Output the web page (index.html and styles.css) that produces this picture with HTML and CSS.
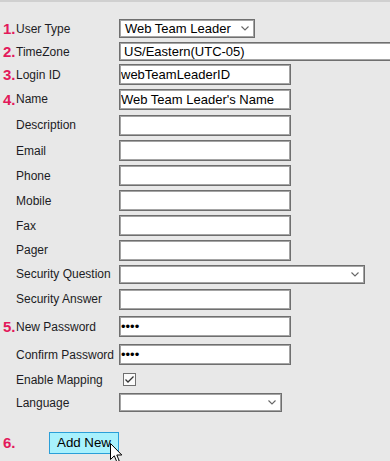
FILE: index.html
```html
<!DOCTYPE html>
<html>
<head>
<meta charset="utf-8">
<link rel="stylesheet" href="styles.css">
</head>
<body>
<form class="form">
  <div class="row h23"><span class="num">1.</span><span class="lbl">User Type</span>
    <div class="sel sel-type"><span>Web Team Leader</span><svg class="chev" width="8" height="5" viewBox="0 0 8 5"><polyline points="0.5,0.5 4,4 7.5,0.5" fill="none" stroke="#666" stroke-width="1.1"/></svg></div></div>
  <div class="row h23"><span class="num">2.</span><span class="lbl">TimeZone</span>
    <input class="field tz" type="text" value="US/Eastern(UTC-05)"></div>
  <div class="row h23"><span class="num">3.</span><span class="lbl">Login ID</span>
    <input class="field" type="text" value="webTeamLeaderID"></div>
  <div class="row h26"><span class="num">4.</span><span class="lbl">Name</span>
    <input class="field" type="text" value="Web Team Leader's Name"></div>
  <div class="row h26"><span class="num"></span><span class="lbl">Description</span>
    <input class="field" type="text"></div>
  <div class="row h25"><span class="num"></span><span class="lbl">Email</span>
    <input class="field" type="text"></div>
  <div class="row h25"><span class="num"></span><span class="lbl">Phone</span>
    <input class="field" type="text"></div>
  <div class="row h25"><span class="num"></span><span class="lbl">Mobile</span>
    <input class="field" type="text"></div>
  <div class="row h25"><span class="num"></span><span class="lbl">Fax</span>
    <input class="field" type="text"></div>
  <div class="row h24"><span class="num"></span><span class="lbl">Pager</span>
    <input class="field" type="text"></div>
  <div class="row h24"><span class="num"></span><span class="lbl">Security Question</span>
    <div class="sel sel-q"><span></span><svg class="chev" width="8" height="5" viewBox="0 0 8 5"><polyline points="0.5,0.5 4,4 7.5,0.5" fill="none" stroke="#666" stroke-width="1.1"/></svg></div></div>
  <div class="row h26"><span class="num"></span><span class="lbl">Security Answer</span>
    <input class="field" type="text"></div>
  <div class="row h29"><span class="num">5.</span><span class="lbl">New Password</span>
    <input class="field" type="password" value="abcd"></div>
  <div class="row h27"><span class="num"></span><span class="lbl">Confirm Password</span>
    <input class="field" type="password" value="abcd"></div>
  <div class="row h23"><span class="num"></span><span class="lbl">Enable Mapping</span>
    <span class="check"><svg width="11" height="11" viewBox="0 0 11 11"><polyline points="1.5,5.5 4,8 9.5,2.5" fill="none" stroke="#333" stroke-width="1.3"/></svg></span></div>
  <div class="row h23"><span class="num"></span><span class="lbl">Language</span>
    <div class="sel sel-lang"><span></span><svg class="chev" width="8" height="5" viewBox="0 0 8 5"><polyline points="0.5,0.5 4,4 7.5,0.5" fill="none" stroke="#666" stroke-width="1.1"/></svg></div></div>
  <div class="row btn-row"><span class="num">6.</span>
    <div class="btn-cell">
      <button class="btn" type="button">Add New</button>
      <svg class="cursor" width="13" height="20" viewBox="0 0 13 20"><path d="M0.5,0.5 L0.5,16.5 L4.3,12.8 L6.8,18.8 L9.2,17.8 L6.8,12 L11.8,12 Z" fill="#fff" stroke="#000" stroke-width="1" stroke-linejoin="miter"/></svg>
    </div>
  </div>
</form>
</body>
</html>
```
FILE: styles.css
```css
html {
  background: #e8e8e8;
}
body {
  margin: 0;
  border-top: 2px solid #d0d0d0;
  font-family: "Liberation Sans", Arial, sans-serif;
  color: #1c1c24;
}
.form {
  padding-top: 15px;
  display: flex;
  flex-direction: column;
}
.row {
  display: grid;
  grid-template-columns: 16px 103px 1fr;
  align-items: center;
}
.h23 { height: 23px; }
.h24 { height: 24px; }
.h25 { height: 25px; }
.h26 { height: 26px; }
.h27 { height: 27px; }
.h29 { height: 29px; }
.num {
  color: #e3195b;
  font-weight: bold;
  font-size: 15px;
  padding-left: 3px;
  white-space: nowrap;
}
.lbl {
  font-size: 12px;
  white-space: nowrap;
}
.field {
  box-sizing: border-box;
  width: 172px;
  height: 21px;
  margin: 0;
  padding: 0 1px;
  border: 1px solid #6f6f6f;
  box-shadow: inset 0 0 0 1px #a4a4a4;
  background: #fff;
  font-family: "Liberation Sans", Arial, sans-serif;
  font-size: 13px;
  color: #000;
  outline: none;
}
.tz {
  width: 280px;
  height: 19px;
  padding-left: 4px;
}
.sel {
  box-sizing: border-box;
  height: 19px;
  display: flex;
  align-items: center;
  justify-content: space-between;
  padding: 0 5px;
  border: 1px solid #6f6f6f;
  box-shadow: inset 0 0 0 1px #a4a4a4;
  background: #fff;
  font-size: 13px;
  color: #000;
}
.sel-type { width: 136px; }
.sel-q { width: 246px; }
.sel-lang { width: 163px; }
.chev { display: block; }
.check {
  box-sizing: border-box;
  width: 13px;
  height: 13px;
  margin-left: 4px;
  border: 1px solid #6f6f6f;
  background: #fafafa;
  display: flex;
  align-items: center;
  justify-content: center;
}
.check svg { display: block; }
.btn-row {
  margin-top: 8px;
  height: 41px;
}
.btn-cell {
  grid-column: 2 / 4;
  position: relative;
  margin-left: 33px;
  height: 22px;
}
.btn {
  box-sizing: border-box;
  width: 70px;
  height: 22px;
  margin: 0;
  padding: 0;
  border: 1px solid #2a9fd8;
  background: #a8f1fd;
  font-family: "Liberation Sans", Arial, sans-serif;
  font-size: 13.3px;
  color: #000;
}
.cursor {
  position: absolute;
  left: 61px;
  top: 11px;
}
```
